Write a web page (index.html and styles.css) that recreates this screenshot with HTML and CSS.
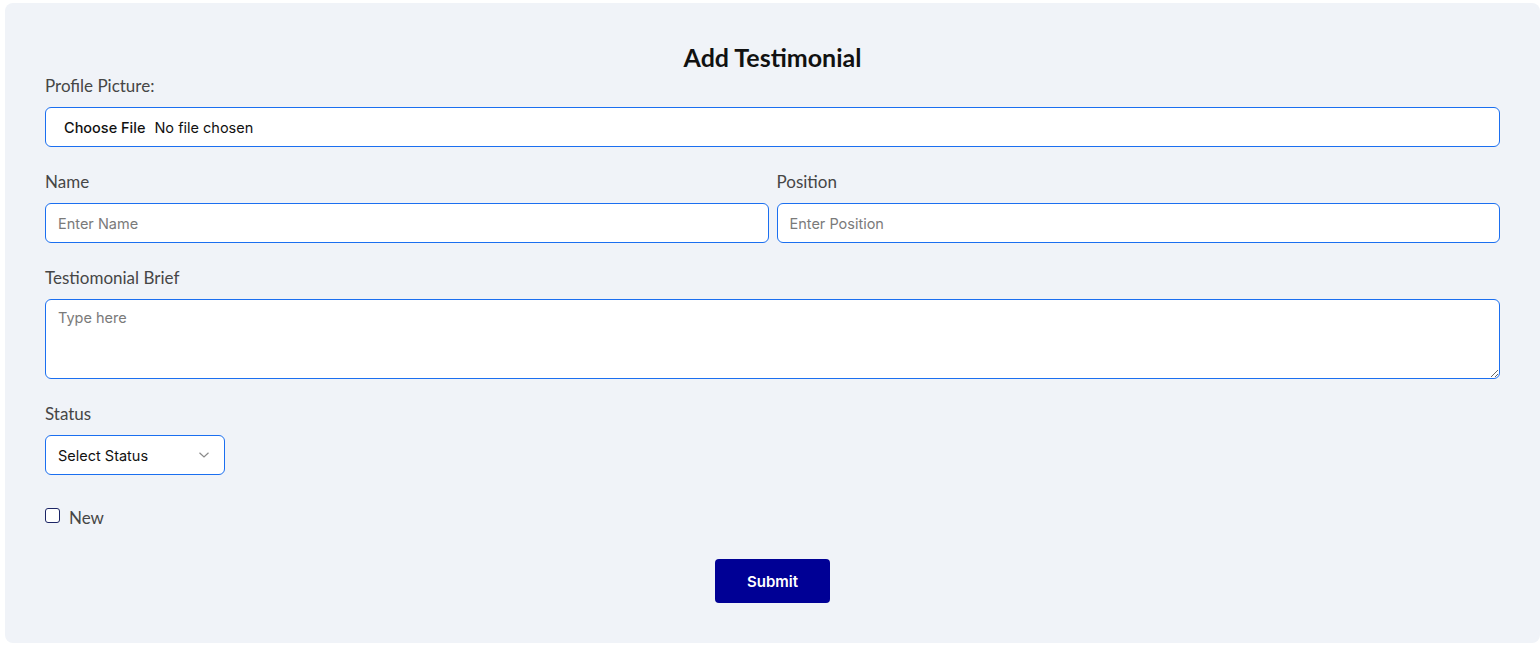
FILE: index.html
```html
<!DOCTYPE html>
<html lang="en">
<head>
<meta charset="utf-8">
<title>Add Testimonial</title>
<link rel="stylesheet" href="styles.css">
</head>
<body>
<form class="card">
  <h2 class="title">Add Testimonial</h2>

  <div class="group">
    <div class="label">Profile Picture:</div>
    <label class="field file-field">
      <input type="file" class="file-hidden">
      <span class="file-btn">Choose File</span>
      <span class="file-name">No file chosen</span>
    </label>
  </div>

  <div class="row">
    <div class="group">
      <label class="label" for="name">Name</label>
      <input id="name" class="field" type="text" placeholder="Enter Name">
    </div>
    <div class="group">
      <label class="label" for="position">Position</label>
      <input id="position" class="field" type="text" placeholder="Enter Position">
    </div>
  </div>

  <div class="group">
    <label class="label" for="brief">Testiomonial Brief</label>
    <textarea id="brief" class="field area" placeholder="Type here"></textarea>
  </div>

  <div class="group">
    <label class="label" for="status">Status</label>
    <div class="select-wrap">
      <select id="status" class="field select">
        <option>Select Status</option>
        <option>Active</option>
        <option>Inactive</option>
      </select>
      <svg class="chev" width="12" height="8" viewBox="0 0 12 8"><path d="M1.5 1.8 L6 6 L10.5 1.8" fill="none" stroke="#8a8a8a" stroke-width="1.2"/></svg>
    </div>
  </div>

  <label class="check">
    <input type="checkbox" class="box">
    <span>New</span>
  </label>

  <div class="actions">
    <button type="button" class="submit">Submit</button>
  </div>
</form>
</body>
</html>
```

FILE: styles.css
```css
html, body {
  margin: 0;
  padding: 0;
  background: #ffffff;
}

.card {
  box-sizing: border-box;
  width: 1535px;
  margin: 3px 0 0 5px;
  padding: 39px 40px 40px 40px;
  background: #f0f3f8;
  border-radius: 8px;
  font-family: "Lato", "Open Sans", sans-serif;
  display: flex;
  flex-direction: column;
}

.title {
  margin: 0 0 2px 0;
  text-align: center;
  font-size: 25px;
  line-height: 30px;
  font-weight: 700;
  color: #111111;
}

.group {
  display: flex;
  flex-direction: column;
  margin-bottom: 23px;
}

.label {
  display: block;
  font-size: 17px;
  line-height: 24px;
  color: #464646;
  margin-bottom: 9px;
}

.field {
  box-sizing: border-box;
  height: 40px;
  width: 100%;
  border: 1px solid #1b6ff0;
  border-radius: 6px;
  background: #ffffff;
  padding: 0 12px;
  font-family: "Inter", "Open Sans", sans-serif;
  font-size: 14.5px;
  color: #111111;
  outline: none;
}

.field::placeholder {
  color: #7a7a7a;
}

.file-field {
  display: flex;
  align-items: center;
  padding-left: 18px;
  cursor: pointer;
}

.file-hidden {
  display: none;
}

.file-btn {
  font-weight: 500;
  color: #111111;
  margin-right: 9px;
}

.file-name {
  color: #111111;
}

.row {
  display: grid;
  grid-template-columns: 1fr 1fr;
  gap: 8px;
}

.area {
  height: 80px;
  padding-top: 9px;
  resize: vertical;
}

.select-wrap {
  position: relative;
  width: 180px;
}

.select {
  appearance: none;
  -webkit-appearance: none;
}

.chev {
  position: absolute;
  right: 15px;
  top: 16px;
  pointer-events: none;
}

.check {
  display: flex;
  align-items: center;
  gap: 9px;
  margin-top: 8px;
  font-size: 17px;
  line-height: 24px;
  color: #464646;
}

.box {
  appearance: none;
  -webkit-appearance: none;
  box-sizing: border-box;
  width: 15px;
  height: 15px;
  margin: -6px 0 0 0;
  border: 1.5px solid #1c2566;
  border-radius: 3px;
  background: #ffffff;
}

.actions {
  display: flex;
  justify-content: center;
  margin-top: 29px;
}

.submit {
  width: 115px;
  height: 44px;
  border: none;
  border-radius: 4px;
  background: #000095;
  color: #ffffff;
  font-family: "Inter", "Open Sans", sans-serif;
  font-size: 15px;
  font-weight: 600;
}
```
